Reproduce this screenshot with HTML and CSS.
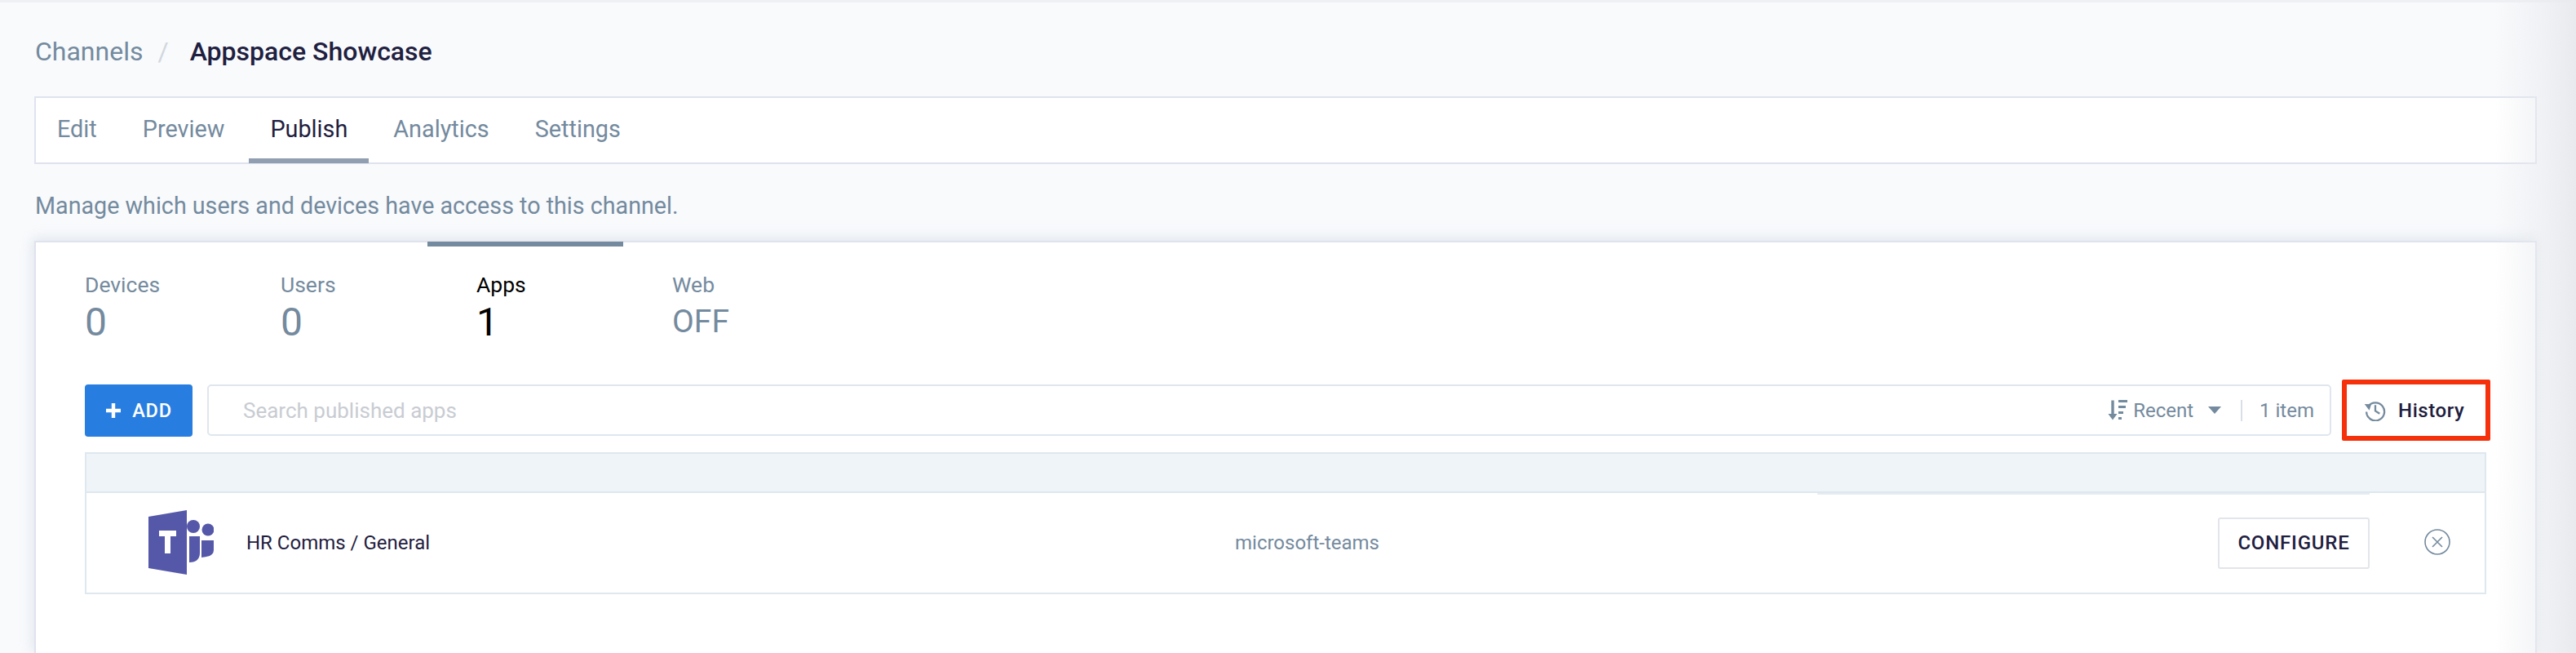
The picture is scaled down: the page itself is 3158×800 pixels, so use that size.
FILE: index.html
```html
<!DOCTYPE html>
<html lang="en">
<head>
<meta charset="utf-8">
<title>Appspace Showcase</title>
<link rel="stylesheet" href="styles.css">
</head>
<body>
<main class="page">
  <nav class="crumbs">
    <span class="crumb">Channels</span>
    <span class="crumb-sep">/</span>
    <span class="crumb-current">Appspace Showcase</span>
  </nav>
  <div class="tabs">
    <span class="tab">Edit</span>
    <span class="tab">Preview</span>
    <span class="tab tab-active">Publish</span>
    <span class="tab">Analytics</span>
    <span class="tab">Settings</span>
  </div>
  <p class="desc">Manage which users and devices have access to this channel.</p>
  <section class="card">
    <div class="stats">
      <div class="stat"><span class="stat-label">Devices</span><span class="stat-value">0</span></div>
      <div class="stat"><span class="stat-label">Users</span><span class="stat-value">0</span></div>
      <div class="stat stat-active"><span class="stat-label">Apps</span><span class="stat-value">1</span></div>
      <div class="stat"><span class="stat-label">Web</span><span class="stat-value stat-value-small">OFF</span></div>
    </div>
    <div class="toolbar">
      <button class="add"><svg class="add-icon" viewBox="0 0 20 20"><path d="M10 1v18M1 10h18" stroke="#fff" stroke-width="4.4" fill="none"/></svg>ADD</button>
      <div class="search">
        <span class="placeholder">Search published apps</span>
        <svg class="sort-icon" viewBox="0 0 26 26" fill="none" stroke="#748a9e">
          <path d="M6 1v21" stroke-width="3.4"/>
          <path d="M0.5 17.5 6 25l5.5-7.5z" fill="#748a9e" stroke="none"/>
          <path d="M13 2h11" stroke-width="3"/>
          <path d="M13 9h9" stroke-width="3"/>
          <path d="M13 16h6" stroke-width="3"/>
          <path d="M13 23h4" stroke-width="3"/>
        </svg>
        <span class="recent">Recent</span>
        <span class="caret"></span>
        <span class="divider"></span>
        <span class="count">1 item</span>
      </div>
      <button class="history">
        <svg class="history-icon" viewBox="0 0 28 28" fill="none" stroke="#748a9e" stroke-width="2.4">
          <path d="M5.4 9.2A11.4 11.4 0 1 1 3.2 16"/>
          <path d="M0.8 6.2l8.6 0.4-2.6 7.6z" fill="#748a9e" stroke="none"/>
          <path d="M14.5 7.5v7.5l5.5 3.5"/>
        </svg>
        History
      </button>
    </div>
    <div class="table">
      <div class="table-head"></div>
      <div class="row">
        <svg class="teams" viewBox="0 0 80 80">
          <path d="M0 8 47 0v79L0 71z" fill="#5558a8"/>
          <path d="M13 25h21v7h-7v21h-7V32h-7z" fill="#fff"/>
          <circle cx="55" cy="20" r="8" fill="#5558a8"/>
          <circle cx="73" cy="24" r="7.5" fill="#5558a8"/>
          <path d="M50 32h13v20q0 12-13 12z" fill="#5558a8"/>
          <path d="M65 37h15v12q0 8-15 9z" fill="#5558a8"/>
        </svg>
        <span class="app-name">HR Comms / General</span>
        <span class="app-type">microsoft-teams</span>
        <button class="configure">CONFIGURE</button>
        <svg class="remove" viewBox="0 0 32 32" fill="none" stroke="#748a9e" stroke-width="1.6">
          <circle cx="16" cy="16" r="15"/>
          <path d="M10 10l12 12M22 10L10 22"/>
        </svg>
      </div>
    </div>
  </section>
</main>
</body>
</html>
```
FILE: styles.css
```css
* { box-sizing: border-box; }

html, body { height: 100%; }

body {
  margin: 0;
  background: #f8fafc;
  font-family: Roboto, "Liberation Sans", sans-serif;
  overflow: hidden;
}

body::before {
  content: "";
  position: absolute;
  left: 0;
  right: 0;
  top: 0;
  height: 3px;
  background: #eef0f3;
}

body::after {
  content: "";
  position: absolute;
  top: 0;
  right: 0;
  bottom: 0;
  width: 100px;
  background: linear-gradient(to right, rgba(232, 234, 238, 0) 0%, rgba(232, 234, 238, 0.55) 60%, #e8eaee 100%);
  pointer-events: none;
}

.page {
  height: 800px;
  padding: 44px 48px 0 42px;
  display: flex;
  flex-direction: column;
}

.crumbs {
  height: 38px;
  display: flex;
  align-items: center;
  font-size: 32px;
  margin-bottom: 36px;
  padding-left: 1px;
}

.crumb { color: #748a9e; }

.crumb-sep {
  color: #d2d7dd;
  margin: 0 26px 0 18px;
}

.crumb-current {
  color: #1f2040;
  font-weight: 500;
}

.tabs {
  height: 83px;
  flex: none;
  display: flex;
  gap: 56px;
  padding: 0 26px;
  background: #fff;
  border: 2px solid #dfe3ee;
}

.tab {
  position: relative;
  display: flex;
  align-items: center;
  padding-bottom: 3px;
  font-size: 28.8px;
  color: #748a9e;
}

.tab-active { color: #1f2040; }

.tab-active::after {
  content: "";
  position: absolute;
  left: -26px;
  right: -26px;
  bottom: -1px;
  height: 6px;
  background: #8f9fb1;
}

.desc {
  margin: 35px 0 26px 1px;
  height: 33px;
  line-height: 33px;
  font-size: 28.7px;
  color: #748a9e;
}

.card {
  flex: 1;
  background: #fff;
  border: 2px solid #dfe3ee;
  border-bottom: 0;
  padding: 0 60px;
  box-shadow: 0 -4px 14px rgba(200, 206, 220, 0.3), -4px 0 14px rgba(200, 206, 220, 0.2);
}

.stats {
  display: flex;
  height: 173px;
}

.stat {
  position: relative;
  width: 240px;
  display: flex;
  flex-direction: column;
  padding-top: 35px;
  color: #748a9e;
}

.stat-active { color: #000; }

.stat-active::before {
  content: "";
  position: absolute;
  left: -60px;
  width: 240px;
  top: -1px;
  height: 6px;
  background: #748a9e;
}

.stat-label {
  font-size: 26.5px;
  line-height: 34px;
}

.stat-value {
  font-size: 48px;
  line-height: 57px;
}

.stat-value-small { font-size: 39px; }

.toolbar {
  display: flex;
  align-items: center;
  height: 75px;
  margin-right: -5px;
  margin-top: -5px;
}

.add {
  width: 132px;
  height: 64px;
  flex: none;
  border: 0;
  border-radius: 4px;
  background: #277ee0;
  color: #fff;
  font: 500 23.5px Roboto, sans-serif;
  letter-spacing: 0.8px;
  display: flex;
  align-items: center;
  justify-content: center;
  gap: 13px;
  padding: 0;
}

.add-icon { width: 20px; height: 20px; }

.search {
  flex: 1;
  height: 63px;
  margin-left: 18px;
  border: 2px solid #dfe6ee;
  border-radius: 5px;
  display: flex;
  align-items: center;
  padding: 0 19px 0 42px;
  font-size: 24px;
  color: #748a9e;
}

.placeholder {
  flex: 1;
  font-size: 26px;
  color: #c8ccd2;
}

.sort-icon { width: 26px; height: 27px; margin-right: 5px; }

.caret {
  width: 0;
  height: 0;
  margin-left: 18px;
  border-left: 8px solid transparent;
  border-right: 8px solid transparent;
  border-top: 9px solid #748a9e;
}

.divider {
  width: 2px;
  height: 26px;
  margin: 0 21px 0 24px;
  background: #d8dfe6;
}

.history {
  width: 182px;
  height: 75px;
  flex: none;
  margin-left: 13px;
  background: #fff;
  border: 6px solid #f5310c;
  border-radius: 2px;
  color: #1f2040;
  font: 500 24px Roboto, sans-serif;
  letter-spacing: 0.6px;
  display: flex;
  align-items: center;
  gap: 15px;
  padding: 0 0 0 21px;
}

.history-icon { width: 27px; height: 27px; }

.table {
  margin: 14px 0 0;
  height: 174px;
  border: 2px solid #dfe8ef;
}

.table-head {
  position: relative;
  height: 48px;
  background: #eff4f8;
  border-bottom: 2px solid #dfe8ef;
}

.table-head::after {
  content: "";
  position: absolute;
  left: 2122px;
  width: 677px;
  bottom: -4px;
  height: 2px;
  background: #e6ebf0;
}

.row {
  height: 122px;
  display: flex;
  align-items: center;
  padding-left: 76px;
}

.teams { width: 80px; height: 80px; flex: none; }

.app-name {
  width: 1212px;
  margin-left: 40px;
  font-size: 24px;
  color: #1f2040;
}

.app-type {
  width: 1205px;
  font-size: 24px;
  color: #748a9e;
}

.configure {
  width: 186px;
  height: 63px;
  flex: none;
  background: #fff;
  border: 2px solid #e2e5ea;
  border-radius: 3px;
  color: #1f2040;
  font: 500 24px Roboto, sans-serif;
  letter-spacing: 0.8px;
  padding: 0;
}

.remove { width: 32px; height: 32px; margin: 0 0 2px 67px; flex: none; }
```
